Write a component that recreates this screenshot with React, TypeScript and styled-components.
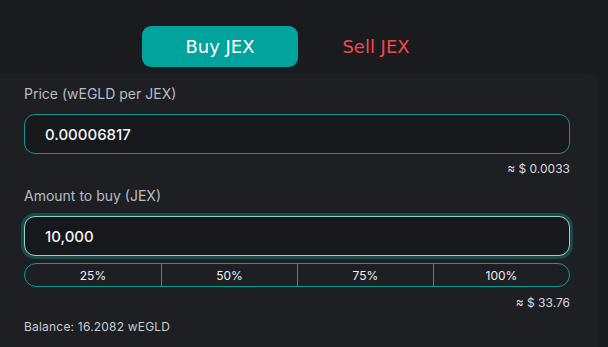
import React, { useState } from 'react'
import styled, { createGlobalStyle } from 'styled-components'

const GlobalStyle = createGlobalStyle`
    html, body {
        margin: 0;
        padding: 0;
        background: #1a1b1e;
        width: 608px;
        height: 347px;
        overflow: hidden;
    }
    * {
        box-sizing: border-box;
    }
`

const Page = styled.div`
    width: 608px;
    height: 347px;
    display: flex;
    flex-direction: column;
    font-family: 'Inter', 'Noto Sans', sans-serif;
    color: #c7cad0;
`

const Tabs = styled.div`
    display: flex;
    align-items: flex-start;
    padding: 26px 0 0 142px;
    height: 74px;
`

const Tab = styled.button<{ active?: boolean }>`
    width: 156px;
    height: 41px;
    border: 0;
    border-radius: 9px;
    background: ${(p) => (p.active ? '#00a49c' : 'transparent')};
    color: ${(p) => (p.active ? '#ffffff' : '#ee4a4b')};
    font-family: 'DejaVu Sans', 'Noto Sans', sans-serif;
    font-size: 18px;
    cursor: pointer;
    padding: 0;
`

const Card = styled.div`
    margin-left: -20px;
    width: 618px;
    flex: 1;
    background: #1e1f23;
    border-radius: 0 10px 0 0;
    padding: 12px 0 0 44px;
    display: flex;
    flex-direction: column;
`

const Field = styled.div<{ gap?: number }>`
    width: 546px;
    margin-top: ${(p) => p.gap ?? 0}px;
    display: flex;
    flex-direction: column;
`

const Label = styled.div`
    font-size: 14px;
    color: #b9bcc3;
    height: 16px;
    line-height: 16px;
    margin-bottom: 12px;
`

const Input = styled.div<{ focused?: boolean }>`
    height: 40px;
    border-radius: 11px;
    background: #17181b;
    border: 1px solid ${(p) => (p.focused ? '#8fd3cc' : '#13948c')};
    box-shadow: ${(p) => (p.focused ? '0 0 0 3px #1d4a47' : 'none')};
    display: flex;
    align-items: center;
    padding-left: 20px;
    font-size: 15px;
    font-weight: 500;
    color: #f3f4f6;
`

const Usd = styled.div<{ gap?: number }>`
    align-self: flex-end;
    font-size: 12px;
    color: #d9dbe0;
    margin-top: ${(p) => p.gap ?? 8}px;
    height: 14px;
    line-height: 14px;
`

const Percents = styled.div`
    margin-top: 7px;
    height: 24px;
    border: 1px solid #0b9c94;
    border-radius: 12px;
    display: grid;
    grid-template-columns: repeat(4, 1fr);
    overflow: hidden;
`

const Percent = styled.button`
    border: 0;
    border-left: 1px solid #0b9c94;
    background: transparent;
    color: #eef0f3;
    font-family: inherit;
    font-size: 12px;
    padding: 0;
    cursor: pointer;
    &:first-child {
        border-left: 0;
    }
`

const Balance = styled.div`
    margin-top: 9px;
    font-size: 12px;
    letter-spacing: 0.2px;
    color: #c9ccd2;
`

export default function App() {
    const [side, setSide] = useState<'buy' | 'sell'>('buy')
    return (
        <Page>
            <GlobalStyle />
            <Tabs>
                <Tab active={side === 'buy'} onClick={() => setSide('buy')}>
                    Buy JEX
                </Tab>
                <Tab active={side === 'sell'} onClick={() => setSide('sell')}>
                    Sell JEX
                </Tab>
            </Tabs>
            <Card>
                <Field>
                    <Label>Price (wEGLD per JEX)</Label>
                    <Input>0.00006817</Input>
                    <Usd>≈ $ 0.0033</Usd>
                </Field>
                <Field gap={12}>
                    <Label>Amount to buy (JEX)</Label>
                    <Input focused>10,000</Input>
                    <Percents>
                        {['25%', '50%', '75%', '100%'].map((p) => (
                            <Percent key={p}>{p}</Percent>
                        ))}
                    </Percents>
                    <Usd gap={9}>≈ $ 33.76</Usd>
                    <Balance>Balance: 16.2082 wEGLD</Balance>
                </Field>
            </Card>
        </Page>
    )
}
